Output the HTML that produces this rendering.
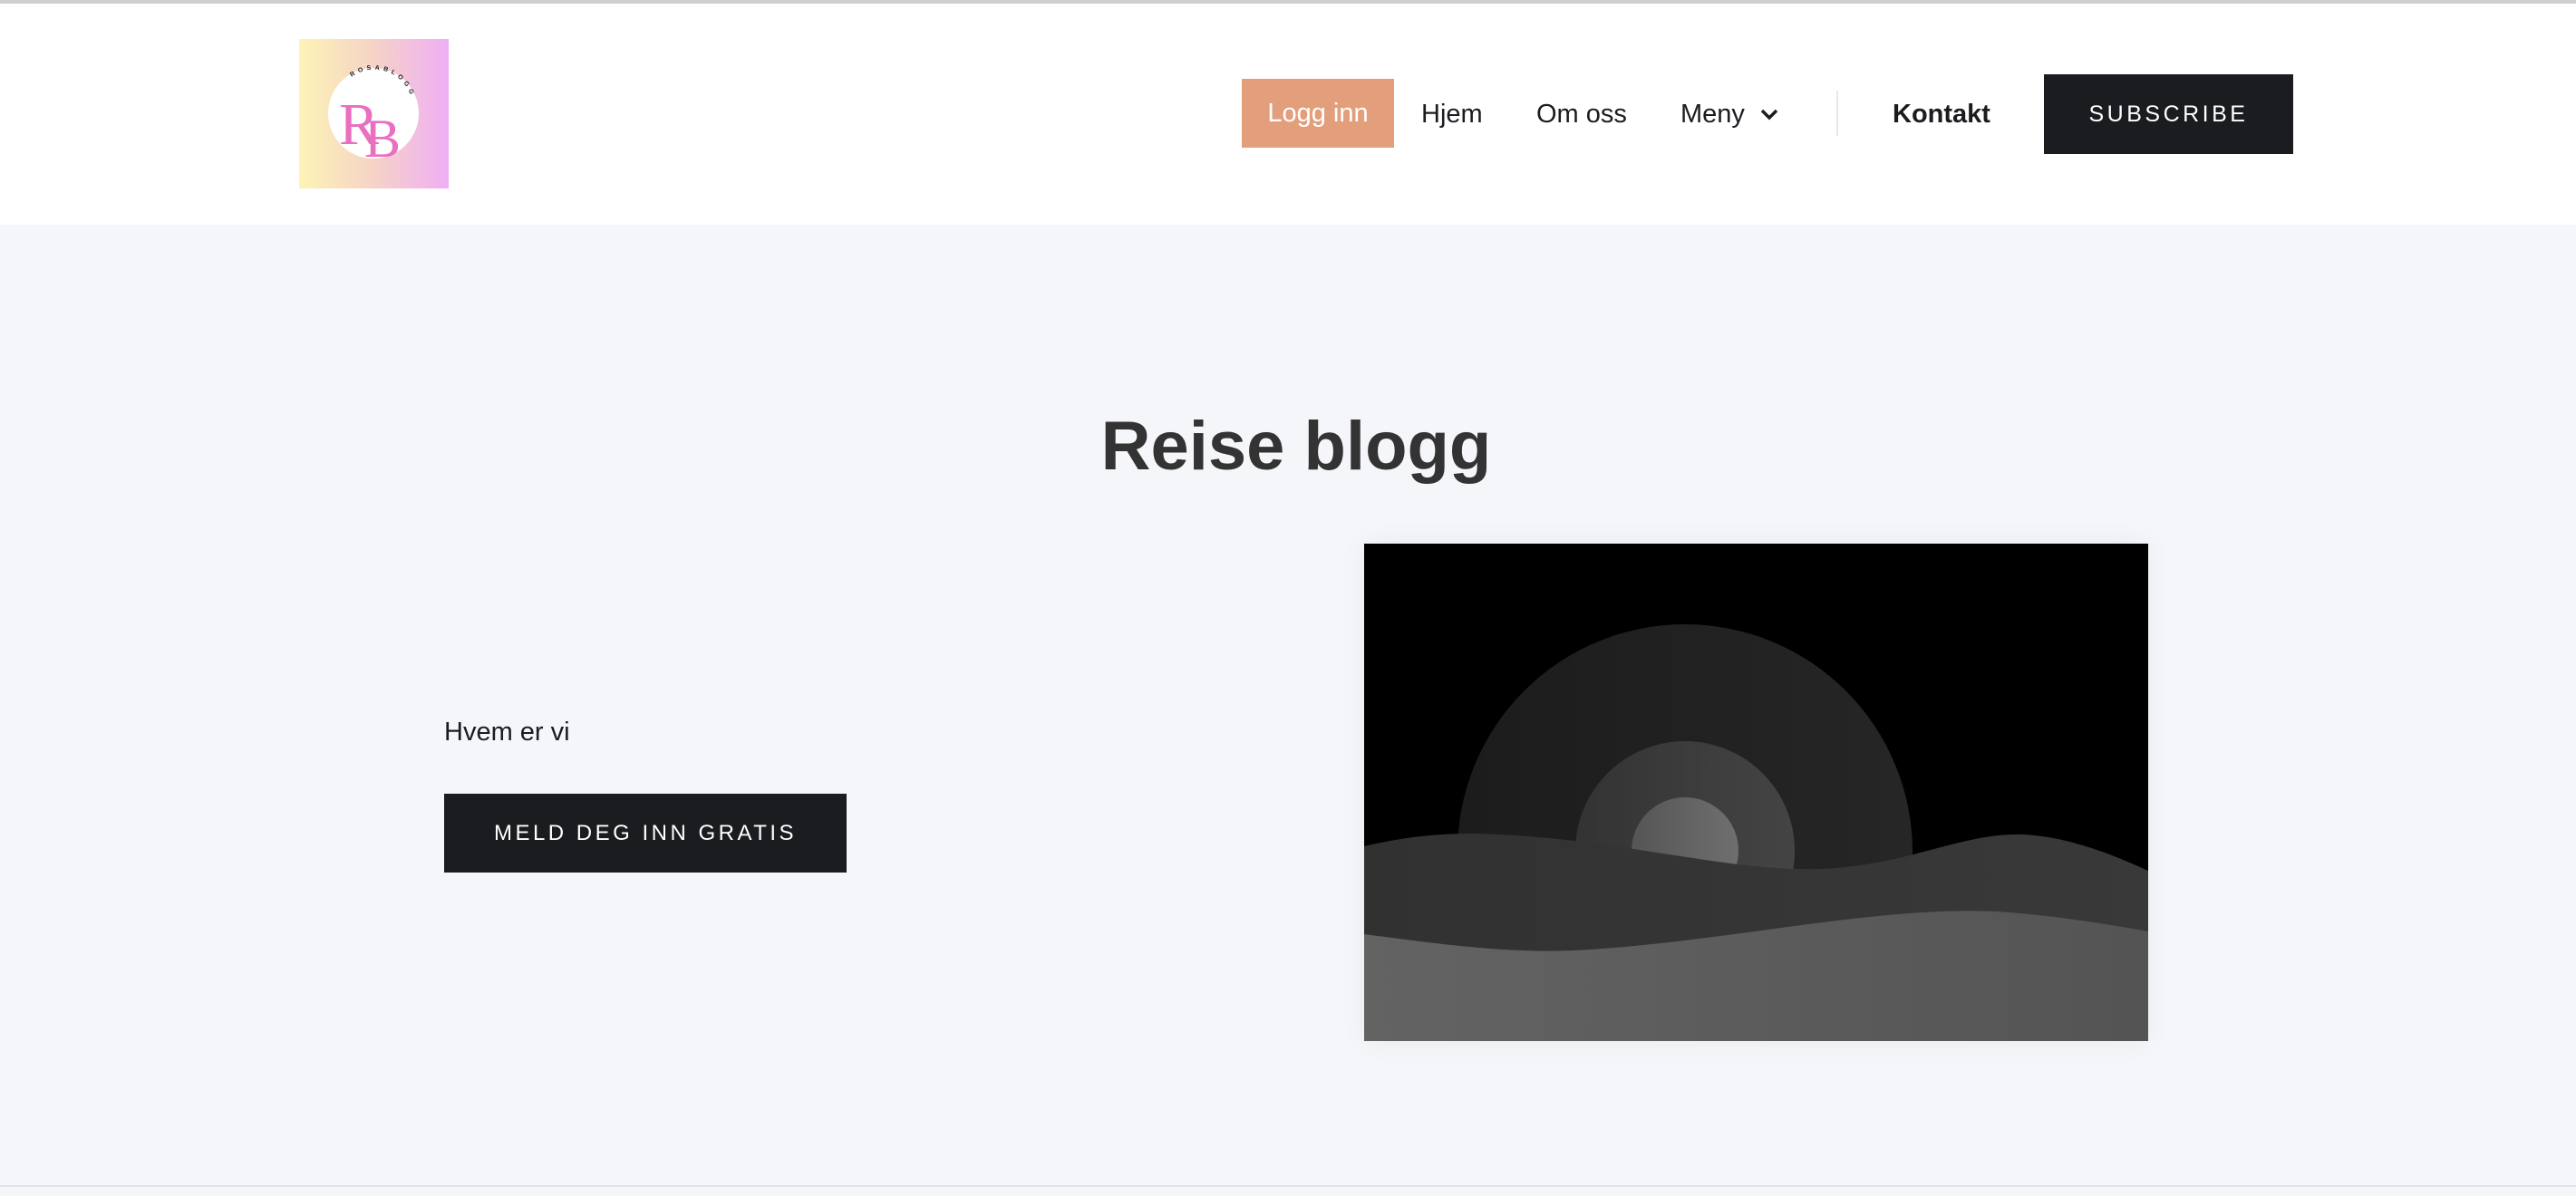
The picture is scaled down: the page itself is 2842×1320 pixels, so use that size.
<!DOCTYPE html>
<html><head><meta charset="utf-8"><style>
*{margin:0;padding:0;box-sizing:border-box}
body{width:2842px;height:1320px;background:#f5f6fa;font-family:"Liberation Sans",sans-serif;position:relative;overflow:hidden}
.top{position:absolute;left:0;top:0;width:2842px;height:4px;background:#cfcfcf}
header{position:absolute;left:0;top:4px;width:2842px;height:244px;background:#fff}
.a{position:absolute;font-size:29px;color:#1b1c20;line-height:1}
.logo{position:absolute;left:330px;top:43px;width:165px;height:165px;background:linear-gradient(90deg,#fdf3b6,#f5d3c6 50%,#f0aef5)}
.btn{position:absolute;background:#1b1c20;color:#fff;display:flex;align-items:center;justify-content:center;letter-spacing:3.5px}
</style></head><body>
<div class="top"></div>
<header></header>
<div class="logo">
<svg width="165" height="165" viewBox="0 0 165 165">
<circle cx="82" cy="82" r="50" fill="#fff"/>
<path id="arc" d="M58 42 A42 42 0 0 1 125 78" fill="none"/>
<text font-size="7" font-weight="bold" letter-spacing="4" fill="#222" font-family="Liberation Sans"><textPath href="#arc">ROSABLOGG</textPath></text>
<text x="44" y="116" font-family="Liberation Serif" font-size="66" fill="#ea6fc0">R</text>
<text x="72" y="130" font-family="Liberation Serif" font-size="60" fill="#ea6fc0">B</text>
</svg></div>
<div style="position:absolute;left:1370px;top:87px;width:168px;height:76px;background:#e39f7c;color:#fff;font-size:29px;display:flex;align-items:center;justify-content:center">Logg inn</div>
<div class="a" style="left:1568px;top:112px">Hjem</div>
<div class="a" style="left:1695px;top:112px">Om oss</div>
<div class="a" style="left:1854px;top:112px">Meny</div>
<svg style="position:absolute;left:1941px;top:118px" width="22" height="16" viewBox="0 0 22 16"><path d="M3 4 L11 12 L19 4" fill="none" stroke="#1b1c20" stroke-width="3.5"/></svg>
<div style="position:absolute;left:2026px;top:100px;width:2px;height:50px;background:#e8e8e8"></div>
<div class="a" style="left:2088px;top:112px;font-weight:bold">Kontakt</div>
<div class="btn" style="left:2255px;top:82px;width:275px;height:88px;font-size:25px">SUBSCRIBE</div>
<div style="position:absolute;left:0;width:2842px;top:449px;text-align:center;font-size:76px;font-weight:bold;color:#333;transform:translateX(9px)">Reise blogg</div>
<div class="a" style="left:490px;top:794px">Hvem er vi</div>
<div class="btn" style="left:490px;top:876px;width:444px;height:87px;font-size:24px">MELD DEG INN GRATIS</div>
<svg style="position:absolute;left:1505px;top:600px;box-shadow:0 0 30px rgba(0,0,0,.05);display:block" width="865" height="549" viewBox="0 0 865 549">
<defs>
<linearGradient id="g1"><stop offset="0" stop-color="#1c1c1c"/><stop offset="1" stop-color="#262626"/></linearGradient>
<linearGradient id="g2"><stop offset="0" stop-color="#333"/><stop offset="1" stop-color="#444"/></linearGradient>
<linearGradient id="g3"><stop offset="0" stop-color="#555"/><stop offset="1" stop-color="#6f6f6f"/></linearGradient>
<linearGradient id="g4"><stop offset="0" stop-color="#313131"/><stop offset="1" stop-color="#393939"/></linearGradient>
<linearGradient id="g5"><stop offset="0" stop-color="#636363"/><stop offset="1" stop-color="#545454"/></linearGradient>
</defs>
<rect width="865" height="549" fill="#000"/>
<circle cx="354" cy="340" r="251" fill="url(#g1)"/>
<circle cx="354" cy="339" r="121" fill="url(#g2)"/>
<circle cx="354" cy="339" r="59" fill="url(#g3)"/>
<path d="M0 334 C50 322 100 318 146 321 C280 326 400 362 502 359 C600 356 660 318 728 321 C780 324 830 345 865 361 L865 560 L0 560 Z" fill="url(#g4)"/>
<path d="M0 431 C90 443 160 452 232 449 C400 440 560 400 697 406 C760 410 820 420 865 428 L865 560 L0 560 Z" fill="url(#g5)"/>
</svg>
<div style="position:absolute;left:0;top:1308px;width:2842px;height:2px;background:#e2e2e6"></div>
</body></html>
